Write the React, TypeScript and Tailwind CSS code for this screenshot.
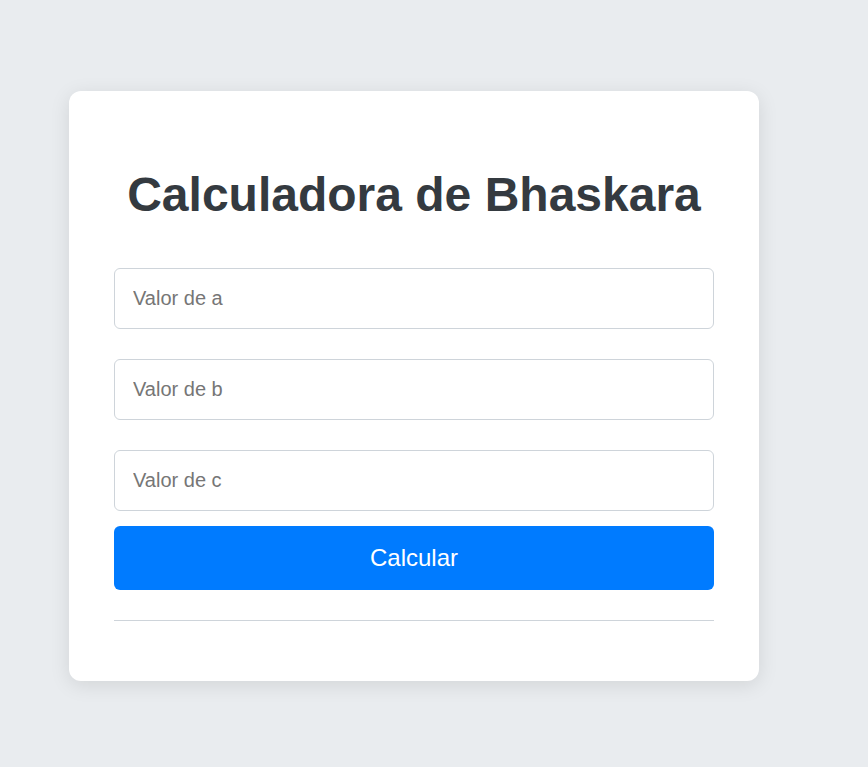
import { useState } from "react";

export default function App() {
  const [a, setA] = useState("");
  const [b, setB] = useState("");
  const [c, setC] = useState("");

  const inputClass =
    "w-full h-[61px] px-[18px] rounded-md border border-[#ced4da] bg-white text-[20px] text-[#333] placeholder:text-[#767676] outline-none";

  return (
    <div className="min-h-[767px] w-full bg-[#e9ecef] font-['Liberation_Sans',Arial,sans-serif] pt-[91px] pl-[69px]">
      <div className="w-[690px] h-[590px] bg-white rounded-xl shadow-[0_4px_20px_rgba(0,0,0,0.1)] px-[45px] pt-[44px]">
        <h1 className="mt-8 text-center text-[48px] leading-[55px] font-bold text-[#343a40]">
          Calculadora de Bhaskara
        </h1>

        <div className="mt-[46px] flex flex-col gap-[30px]">
          <input className={inputClass} placeholder="Valor de a" value={a} onChange={(e) => setA(e.target.value)} />
          <input className={inputClass} placeholder="Valor de b" value={b} onChange={(e) => setB(e.target.value)} />
          <input className={inputClass} placeholder="Valor de c" value={c} onChange={(e) => setC(e.target.value)} />
        </div>

        <button className="mt-[15px] w-full h-[64px] rounded-md bg-[#007bff] text-white text-[24px]">
          Calcular
        </button>

        <hr className="mt-[30px] border-t border-[#ced4da]" />
      </div>
    </div>
  );
}
